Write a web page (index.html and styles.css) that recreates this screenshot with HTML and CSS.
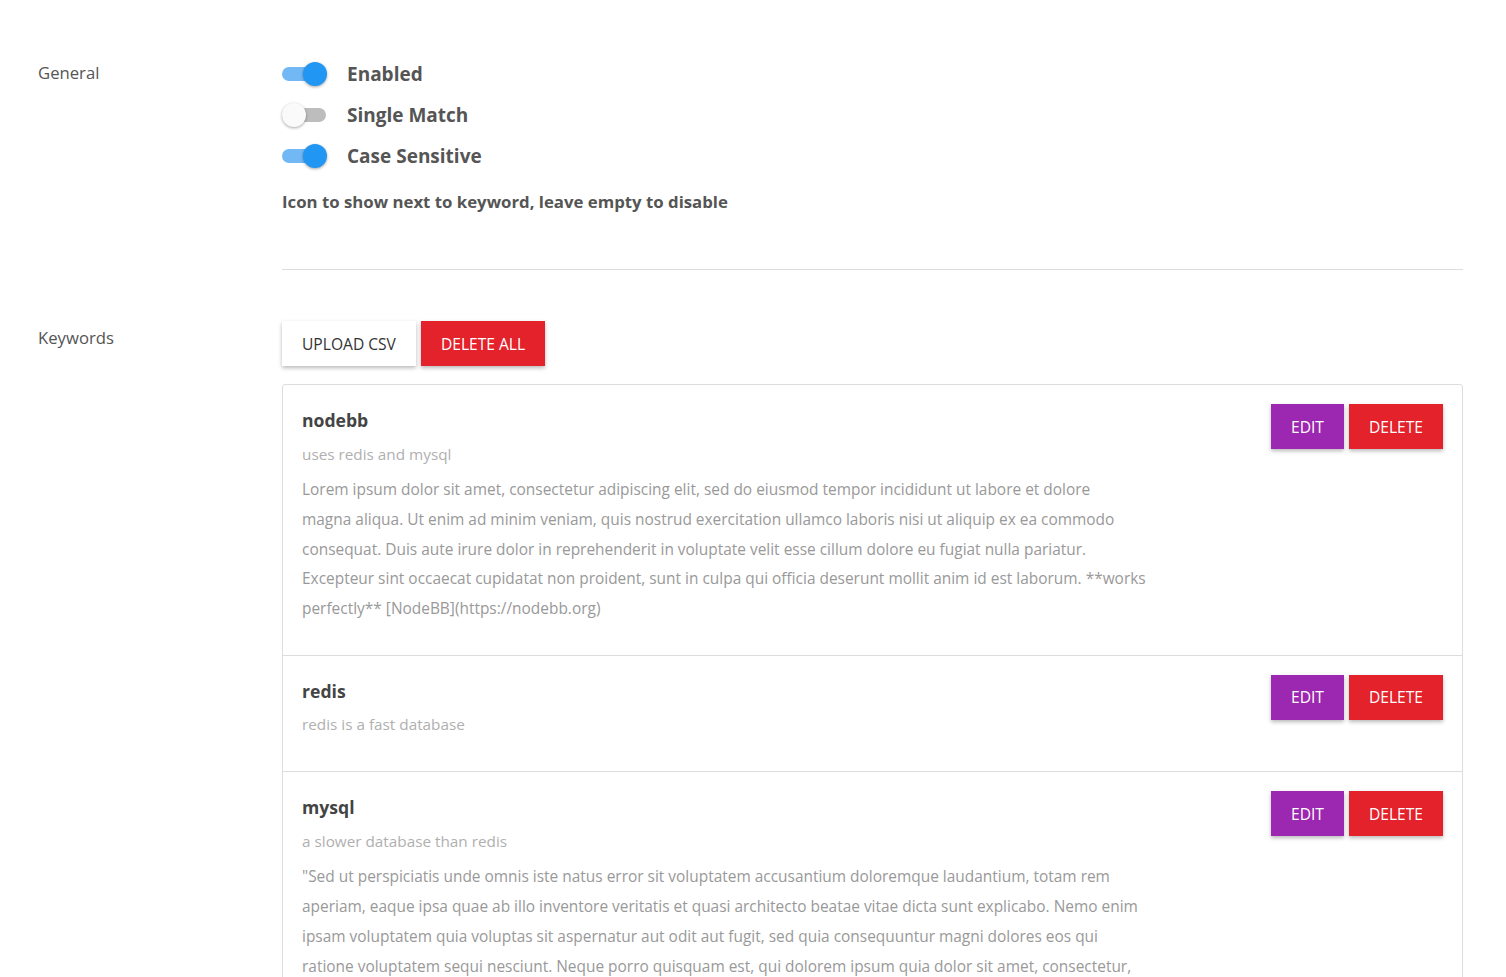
FILE: index.html
```html
<!DOCTYPE html>
<html lang="en">
<head>
<meta charset="utf-8">
<title>Keywords settings</title>
<link rel="stylesheet" href="styles.css">
</head>
<body>
<div class="page">
  <section class="row row-general">
    <div class="row-label">General</div>
    <div class="row-content">
      <label class="toggle-row">
        <span class="switch on"><span class="track"></span><span class="thumb"></span></span>
        <span class="toggle-text">Enabled</span>
      </label>
      <label class="toggle-row">
        <span class="switch"><span class="track"></span><span class="thumb"></span></span>
        <span class="toggle-text">Single Match</span>
      </label>
      <label class="toggle-row">
        <span class="switch on"><span class="track"></span><span class="thumb"></span></span>
        <span class="toggle-text">Case Sensitive</span>
      </label>
      <div class="field-label">Icon to show next to keyword, leave empty to disable</div>
      <div class="divider"></div>
    </div>
  </section>

  <section class="row row-keywords">
    <div class="row-label">Keywords</div>
    <div class="row-content">
      <div class="toolbar">
        <button class="btn btn-white">UPLOAD CSV</button>
        <button class="btn btn-red">DELETE ALL</button>
      </div>
      <ul class="kw-list">
        <li class="kw-item">
          <div class="kw-body">
            <div class="kw-title">nodebb</div>
            <div class="kw-sub">uses redis and mysql</div>
            <p class="kw-text">Lorem ipsum dolor sit amet, consectetur adipiscing elit, sed do eiusmod tempor incididunt ut labore et dolore<br>
magna aliqua. Ut enim ad minim veniam, quis nostrud exercitation ullamco laboris nisi ut aliquip ex ea commodo<br>
consequat. Duis aute irure dolor in reprehenderit in voluptate velit esse cillum dolore eu fugiat nulla pariatur.<br>
Excepteur sint occaecat cupidatat non proident, sunt in culpa qui officia deserunt mollit anim id est laborum. **works<br>
perfectly** [NodeBB](https://nodebb.org)</p>
          </div>
          <div class="kw-actions">
            <button class="btn btn-purple">EDIT</button>
            <button class="btn btn-red">DELETE</button>
          </div>
        </li>
        <li class="kw-item">
          <div class="kw-body">
            <div class="kw-title">redis</div>
            <div class="kw-sub">redis is a fast database</div>
          </div>
          <div class="kw-actions">
            <button class="btn btn-purple">EDIT</button>
            <button class="btn btn-red">DELETE</button>
          </div>
        </li>
        <li class="kw-item">
          <div class="kw-body">
            <div class="kw-title">mysql</div>
            <div class="kw-sub">a slower database than redis</div>
            <p class="kw-text">"Sed ut perspiciatis unde omnis iste natus error sit voluptatem accusantium doloremque laudantium, totam rem<br>
aperiam, eaque ipsa quae ab illo inventore veritatis et quasi architecto beatae vitae dicta sunt explicabo. Nemo enim<br>
ipsam voluptatem quia voluptas sit aspernatur aut odit aut fugit, sed quia consequuntur magni dolores eos qui<br>
ratione voluptatem sequi nesciunt. Neque porro quisquam est, qui dolorem ipsum quia dolor sit amet, consectetur,<br>
adipisci velit, sed quia non numquam eius modi tempora incidunt ut labore et dolore magnam aliquam quaerat<br>
voluptatem."</p>
          </div>
          <div class="kw-actions">
            <button class="btn btn-purple">EDIT</button>
            <button class="btn btn-red">DELETE</button>
          </div>
        </li>
      </ul>
    </div>
  </section>
</div>
</body>
</html>
```

FILE: styles.css
```css
html, body {
  margin: 0;
  padding: 0;
  background: #ffffff;
}

body {
  font-family: "Open Sans", "Noto Sans", "Liberation Sans", sans-serif;
  color: #555555;
}

.page {
  padding: 0 43px 0 38px;
}

.row {
  display: grid;
  grid-template-columns: 244px 1fr;
}

.row-general {
  padding-top: 53px;
}

.row-keywords {
  padding-top: 51px;
}

.row-label {
  font-size: 16.7px;
  line-height: 24px;
  color: #555555;
}

.row-general .row-label {
  margin-top: 8px;
}

.row-keywords .row-label {
  margin-top: 5px;
}

/* toggles */
.toggle-row {
  display: flex;
  align-items: center;
  height: 41px;
  cursor: pointer;
}

.switch {
  position: relative;
  width: 45px;
  height: 24px;
  flex: 0 0 45px;
}

.switch .track {
  position: absolute;
  left: 0;
  right: 1px;
  top: 5px;
  height: 14px;
  border-radius: 7px;
  background: #bdbdbd;
}

.switch .thumb {
  position: absolute;
  top: 0;
  left: 0;
  width: 24px;
  height: 24px;
  border-radius: 50%;
  background: #fafafa;
  box-shadow: 0 1px 3px rgba(0, 0, 0, 0.35);
}

.switch.on .track {
  background: #72b8f4;
}

.switch.on .thumb {
  left: 21px;
  background: #2196f3;
}

.toggle-text {
  margin-left: 20px;
  font-size: 19px;
  font-weight: 700;
  color: #555555;
}

.field-label {
  margin-top: 14px;
  font-size: 16.8px;
  line-height: 24px;
  font-weight: 700;
  color: #555555;
}

.divider {
  margin-top: 55px;
  height: 1px;
  background: #dddddd;
}

/* buttons */
.toolbar {
  display: flex;
  gap: 5px;
}

.btn {
  font-family: inherit;
  font-size: 15.6px;
  height: 45px;
  padding: 0 20px;
  border: none;
  border-radius: 0;
  cursor: pointer;
  box-shadow: 0 2px 4px rgba(0, 0, 0, 0.28);
}

.btn-white {
  background: #ffffff;
  color: #333333;
}

.btn-red {
  background: #e3222b;
  color: #ffffff;
}

.btn-purple {
  background: #9c27b0;
  color: #ffffff;
}

/* list */
.kw-list {
  list-style: none;
  margin: 18px 0 0;
  padding: 0;
  border: 1px solid #dddddd;
  border-radius: 3px;
}

.kw-item {
  display: flex;
  justify-content: space-between;
  align-items: flex-start;
  padding: 19px 19px 31px;
  border-top: 1px solid #dddddd;
}

.kw-item:first-child {
  border-top: none;
}

.kw-body {
  flex: 0 1 900px;
}

.kw-title {
  font-size: 17.6px;
  font-weight: 700;
  line-height: 32px;
  color: #444444;
}

.kw-sub {
  margin-top: 1.5px;
  font-size: 15.3px;
  line-height: 32px;
  color: #b0b0b0;
}

.kw-text {
  margin: 5.5px 0 0;
  font-size: 15.45px;
  line-height: 29.75px;
  color: #999999;
}

.kw-actions {
  display: flex;
  gap: 5px;
}
```
